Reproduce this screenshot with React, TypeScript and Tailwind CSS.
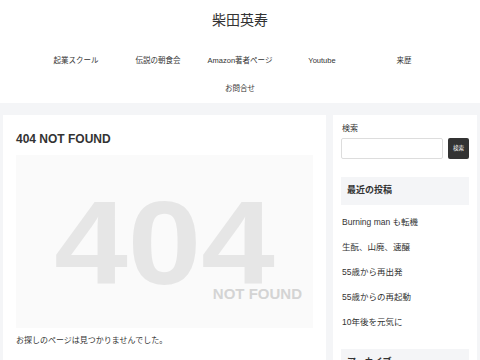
const font = { fontFamily: '"Liberation Sans", "Noto Sans CJK JP", sans-serif' };

const navItems = ["起業スクール", "伝説の朝食会", "Amazon著者ページ", "Youtube", "来歴", "お問合せ"];
const recentPosts = ["Burning man も転機", "生酛、山廃、速醸", "55歳から再出発", "55歳からの再起動", "10年後を元気に"];

function Header() {
    return (
        <header className="bg-white">
            <div className="flex h-[40px] items-center justify-center">
                <span className="text-[14px] text-[#333]">柴田英寿</span>
            </div>
            <nav className="mx-auto mt-[7px] flex w-[420px] flex-wrap justify-center">
                {navItems.map((item) => (
                    <span key={item} className="flex h-[28px] w-[82px] items-center justify-center text-[7.5px] text-[#333]">
                        {item}
                    </span>
                ))}
            </nav>
        </header>
    );
}

function NotFoundImage() {
    return (
        <div className="mt-[9px] flex h-[173px] flex-col bg-[#fafafa]">
            <div className="mt-[45px] scale-x-[1.12] text-center text-[118px] leading-[86px] font-bold text-[#e6e6e6]">
                404
            </div>
            <div className="mr-[11px] self-end text-[15px] font-bold leading-none text-[#d4d4d4]">
                NOT FOUND
            </div>
        </div>
    );
}

function MainContent() {
    return (
        <main className="w-[323px] shrink-0 bg-white px-[13px] pt-[17px] pb-8">
            <h1 className="text-[12px] font-bold leading-[14px] text-[#333]">404 NOT FOUND</h1>
            <NotFoundImage />
            <p className="mt-[7px] text-[8px] leading-[12px] text-[#333]">お探しのページは見つかりませんでした。</p>
        </main>
    );
}

function Sidebar() {
    return (
        <aside className="w-[144px] shrink-0 bg-white px-[8px] pt-[9px] pb-8">
            <div className="pl-[1px] text-[8px] leading-[10px] text-[#333]">検索</div>
            <div className="mt-[4px] flex gap-[5px]">
                <div className="h-[21px] w-[102px] rounded-[2px] border border-[#ddd] bg-white" />
                <button className="flex h-[21px] w-[21px] items-center justify-center rounded-[2px] bg-[#333] text-[5.5px] text-white">
                    検索
                </button>
            </div>
            <div className="mt-[18px] flex h-[28px] items-center bg-[#f4f5f7] px-[6px] text-[9px] font-bold text-[#333]">
                最近の投稿
            </div>
            <ul className="mt-[5px]">
                {recentPosts.map((post) => (
                    <li key={post} className="flex h-[25px] items-center pl-[1px] text-[8.5px] text-[#333]">
                        {post}
                    </li>
                ))}
            </ul>
            <div className="mt-[14px] flex h-[28px] items-center bg-[#f4f5f7] px-[6px] text-[9px] font-bold text-[#333]">
                アーカイブ
            </div>
        </aside>
    );
}

export default function App() {
    return (
        <div className="h-[360px] overflow-hidden bg-[#f4f5f7]" style={font}>
            <Header />
            <div className="mt-[12px] flex gap-[7px] px-[3px]">
                <MainContent />
                <Sidebar />
            </div>
        </div>
    );
}
